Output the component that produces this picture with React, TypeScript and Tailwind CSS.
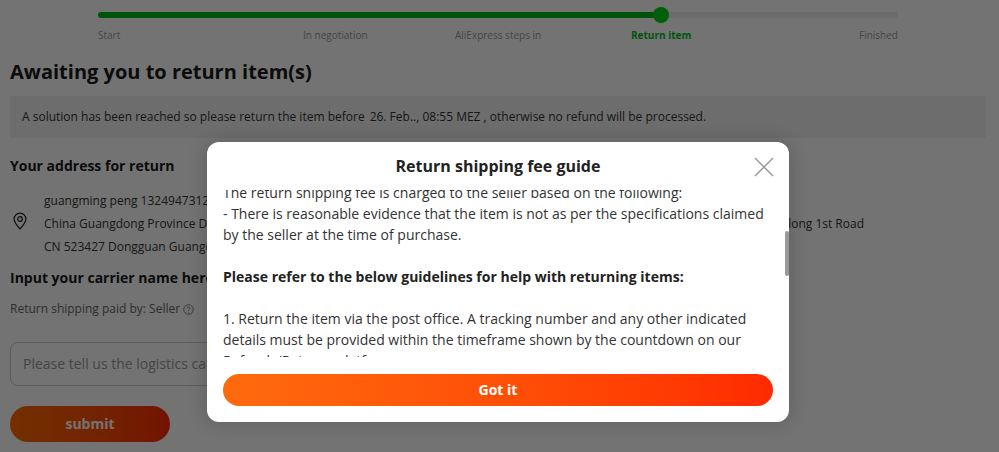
const font = { fontFamily: '"Open Sans", sans-serif' };

const steps = ['Start', 'In negotiation', 'AliExpress steps in', 'Return item', 'Finished'];

function StepBar() {
  return (
    <div className="pt-[12px] pl-[98px] pr-[101px]">
      <div className="relative h-[6px] rounded-full bg-[#eeeeee]">
        <div className="h-[6px] w-[563px] rounded-full bg-[#00bb18]" />
        <div className="absolute left-[555px] top-[-5px] h-4 w-4 rounded-full bg-[#00d418]" />
      </div>
      <div className="relative mt-[10px] h-[14px] text-[10px] leading-[14px] text-[#999999]">
        <span className="absolute left-0">{steps[0]}</span>
        <span className="absolute left-[205px]">{steps[1]}</span>
        <span className="absolute left-[357px]">{steps[2]}</span>
        <span className="absolute left-[533px] font-bold text-[#00bb18]">{steps[3]}</span>
        <span className="absolute right-0">{steps[4]}</span>
      </div>
    </div>
  );
}

function PageBehind() {
  return (
    <div className="h-[452px] overflow-hidden bg-white pl-[10px] pr-[13px] text-[#191919]" style={font}>
      <div className="-ml-[10px] -mr-[13px]">
        <StepBar />
      </div>
      <h1 className="mt-[15px] text-[20px] font-bold leading-[30px]">Awaiting you to return item(s)</h1>
      <div className="mt-[9px] flex h-[42px] items-center bg-[#f2f2f2] px-3 text-[12px] text-[#333333]">
        <span>A solution has been reached so please return the item before</span>
        <span className="ml-[5px] whitespace-pre">26. Feb.., 08:55 MEZ , otherwise no refund will be processed.</span>
      </div>
      <h2 className="mt-[18px] text-[14px] font-bold leading-5">Your address for return</h2>
      <div className="mt-[13px] flex items-center">
        <svg viewBox="0 0 14 18" className="ml-[3px] -mt-[6px] h-[18px] w-[14px]" fill="none" stroke="#191919" strokeWidth="1.2">
          <path d="M7 16.8C3.6 13.2 1.1 10 1.1 7a5.9 5.9 0 0 1 11.8 0c0 3-2.500 6.200-5.900 9.800z" />
          <circle cx="7" cy="7" r="2.300" />
        </svg>
        <div className="ml-[17px] w-[820px] text-[12px] leading-[23px] text-[#333333]">
          <div>guangming peng 13249473120</div>
          <div className="flex justify-between">
            <span>China Guangdong Province Dongguan</span>
            <span>Dalong 1st Road</span>
          </div>
          <div>CN 523427 Dongguan Guangdong</div>
        </div>
      </div>
      <h2 className="mt-[10px] text-[14px] font-bold leading-5">Input your carrier name here</h2>
      <div className="mt-[11px] flex items-center text-[12px] leading-5 text-[#666666]">
        Return shipping paid by: Seller
        <svg viewBox="0 0 12 12" className="ml-[3px] mt-[1px] h-[11px] w-[11px]" fill="none" stroke="#666666" strokeWidth="0.9">
          <circle cx="6" cy="6" r="5.200" />
          <path d="M4.500 4.800a1.500 1.500 0 1 1 2.300 1.300c-.5.3-.8.600-.8 1.100" />
          <path d="M6 8.500v.8" />
        </svg>
      </div>
      <div className="mt-[23px] flex h-[44px] w-[560px] items-center rounded-lg border border-[#cccccc] px-3 pb-[2px] text-[14px] text-[#999999]">
        Please tell us the logistics carrier name
      </div>
      <div className="mt-5 flex h-9 w-40 items-center justify-center rounded-[18px] bg-gradient-to-r from-[#ff6a00] to-[#ff2a00] pb-[2px] text-[14px] font-bold text-white">
        submit
      </div>
    </div>
  );
}

function Modal() {
  return (
    <div
      className="absolute left-[207px] top-[142px] flex h-[280px] w-[582px] flex-col rounded-xl bg-white shadow-[0_0_20px_rgba(0,0,0,0.2)]"
      style={font}
    >
      <div className="relative h-[48px] shrink-0 pt-[13px] text-center text-[16px] font-bold leading-[22px] text-[#222222]">
        Return shipping fee guide
        <svg viewBox="0 0 20 20" className="absolute right-[15px] top-[15px] h-5 w-5" stroke="#999999" strokeWidth="1.500">
          <path d="M1 1l18 18M19 1L1 19" />
        </svg>
      </div>
      <div className="relative h-[167px] shrink-0 overflow-hidden px-4 text-[14px] leading-[21px] text-[#333333]">
        <div className="-mt-[8px]">
          <p>The return shipping fee is charged to the seller based on the following:</p>
          <p>- There is reasonable evidence that the item is not as per the specifications claimed by the seller at the time of purchase.</p>
          <p className="mt-[21px] font-bold text-[#222222]">Please refer to the below guidelines for help with returning items:</p>
          <p className="mt-[21px]">1. Return the item via the post office. A tracking number and any other indicated details must be provided within the timeframe shown by the countdown on our Refunds/Returns platform.</p>
        </div>
        <div className="absolute right-0 top-[41px] h-[45px] w-1 rounded-full bg-[#999999]" />
      </div>
      <div className="mt-[17px] px-4">
        <div className="flex h-8 items-center justify-center rounded-full bg-gradient-to-r from-[#ff6a0e] to-[#ff2a00] pb-[2px] text-[14px] font-bold text-white">
          Got it
        </div>
      </div>
    </div>
  );
}

export default function App() {
  return (
    <div className="relative h-[452px] w-[999px] overflow-hidden">
      <PageBehind />
      <div className="absolute inset-0 bg-black/55" />
      <Modal />
    </div>
  );
}
